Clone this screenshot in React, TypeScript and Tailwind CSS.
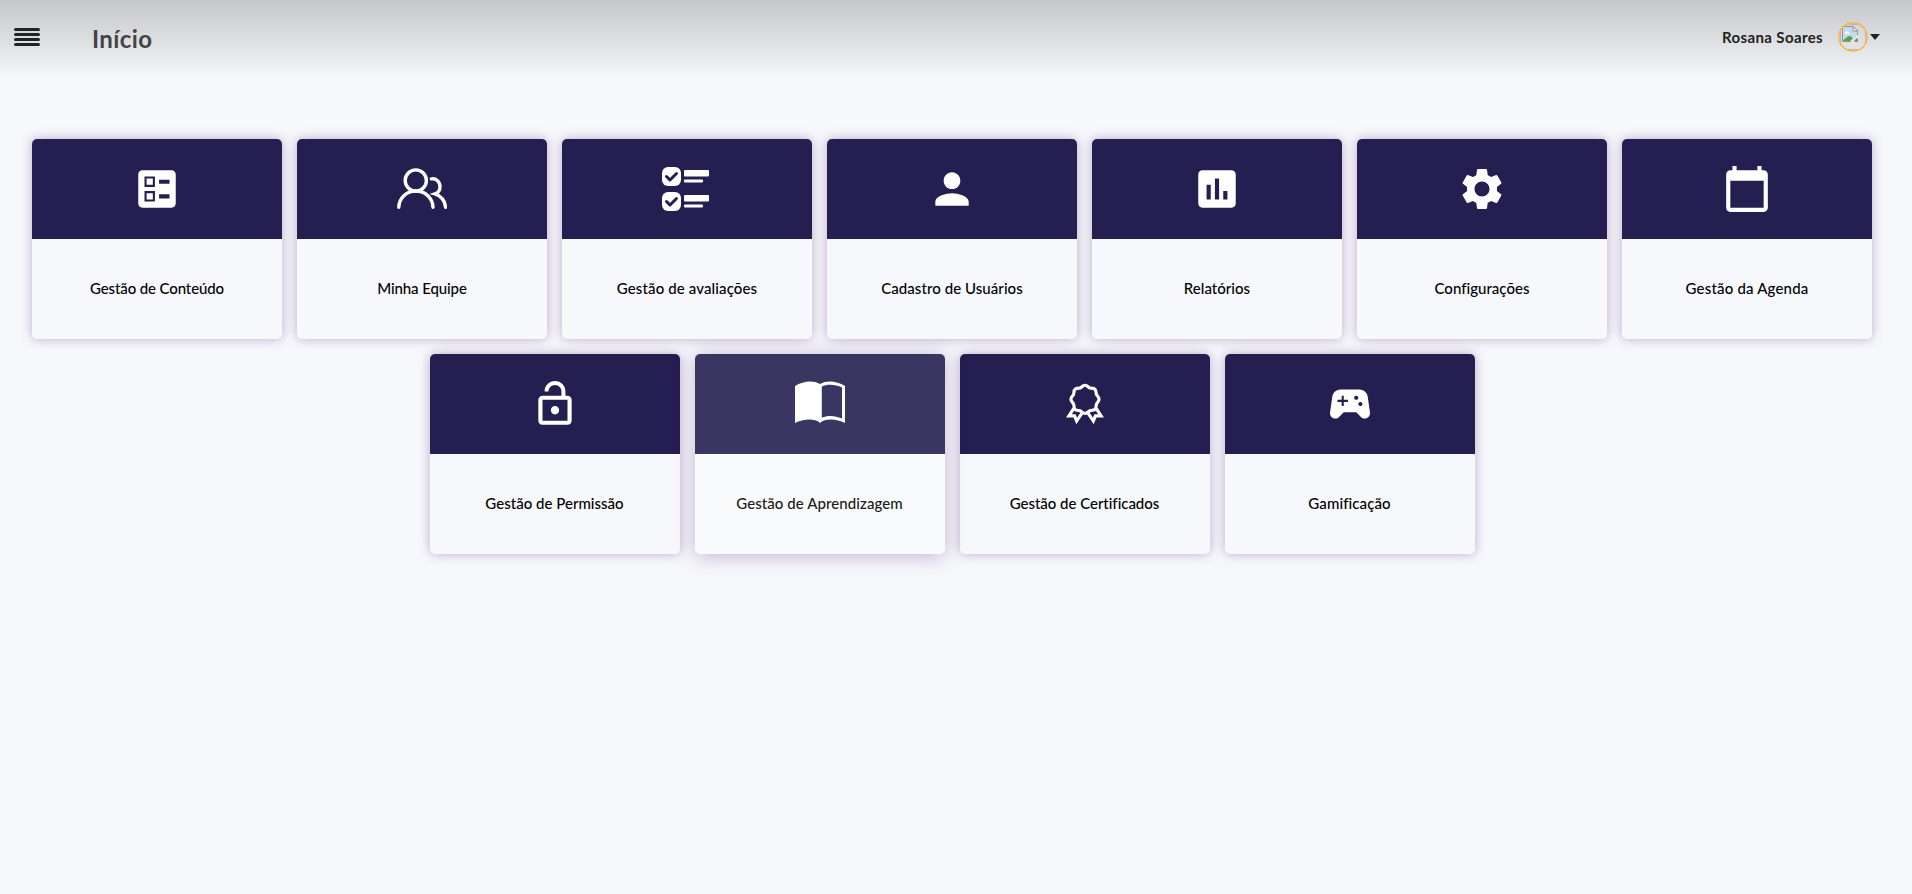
import React from "react";
import { LiaAwardSolid } from "react-icons/lia";
import {
    MdAssessment,
    MdBallot,
    MdCalendarToday,
    MdLockOpen,
    MdPerson,
    MdSettings,
    MdSportsEsports,
} from "react-icons/md";

const TeamIcon = () => (
    <svg width="50" height="50" viewBox="0 0 50 50" fill="none" stroke="currentColor" strokeWidth="3.4" strokeLinecap="round">
        <circle cx="18.8" cy="16.5" r="10.6" />
        <path d="M1.8 43.2C2 34 9.5 27 18.8 27S35.8 34 36 43.2" />
        <path d="M34.3 14.9c5-.8 8.7 3 8.7 7.6 0 3.6-2 6.400-5 7.400 6 1.800 10.300 7 10.500 13.300" />
    </svg>
);

const ChecklistIcon = () => (
    <svg width="50" height="50" viewBox="0 0 50 50" fill="currentColor">
        <rect x="0" y="3" width="19" height="19" rx="6" />
        <rect x="0" y="28" width="19" height="19" rx="6" />
        <rect x="22" y="6" width="25" height="6.5" rx="1" />
        <rect x="22" y="15.5" width="19" height="3" rx="1" />
        <rect x="22" y="31" width="25" height="6.5" rx="1" />
        <rect x="22" y="40.5" width="19" height="3" rx="1" />
        <path
            d="M4.5 12.5l3.5 3.5 6.5-6.5M4.5 37.5l3.5 3.5 6.5-6.5"
            fill="none"
            stroke="#251e50"
            strokeWidth="3"
            strokeLinecap="round"
            strokeLinejoin="round"
        />
    </svg>
);

const BookIcon = () => (
    <svg width="50" height="50" viewBox="0 0 50 50" fill="currentColor">
        <path d="M0 7C8 2 18 1 25 5C32 1 42 2 50 7V44C42 40 30.5 39 25 44C19.5 39 8 40 0 44Z" />
        <path d="M26.8 7.5C33 4.8 40.5 5.5 47 8.5V39.5C40.5 36.8 33 36.1 26.8 38.8Z" fill="#3b3661" />
    </svg>
);

const BrokenImage = () => (
    <svg width="30" height="30" viewBox="0 0 30 30">
        <path d="M2.5 5V25M27.5 9V21M10 27.5H20M10 2.5H20" stroke="#b8b8bb" />
        <path d="M4.5 4.5H15L19.5 9V19.5H4.5Z" fill="#c5d8f5" stroke="#929292" />
        <path d="M15 4.5V9H19.5Z" fill="#fff" stroke="#929292" />
        <path d="M7 11c0-2 2.500-2.500 3-1 1.500 0 2 1 1.500 2H7Z" fill="#fff" />
        <path d="M5 19c2-3 5-5 7-5l3 2-3 3Z" fill="#57a639" />
        <path d="M12 20.5L20 12.5V16L15.5 20.5Z" fill="#e7e7ea" />
        <path d="M16 19l3-3v3Z" fill="#57a639" />
        <circle cx="15" cy="15" r="14.3" fill="none" stroke="#fdb225" strokeWidth="1.4" />
    </svg>
);

const cards = [
    { label: "Gestão de Conteúdo", icon: <MdBallot size={50} />, spacing: "tracking-[-0.12px]" },
    { label: "Minha Equipe", icon: <TeamIcon />, spacing: "tracking-[-0.1px]" },
    { label: "Gestão de avaliações", icon: <ChecklistIcon />, spacing: "tracking-[0.12px]" },
    { label: "Cadastro de Usuários", icon: <MdPerson size={50} />, spacing: "tracking-[0.06px]" },
    { label: "Relatórios", icon: <MdAssessment size={50} />, spacing: "tracking-[0.03px]" },
    { label: "Configurações", icon: <MdSettings size={50} />, spacing: "tracking-[0.02px]" },
    { label: "Gestão da Agenda", icon: <MdCalendarToday size={50} />, spacing: "tracking-[0.18px]" },
    { label: "Gestão de Permissão", icon: <MdLockOpen size={50} />, spacing: "tracking-[0.02px]" },
    { label: "Gestão de Aprendizagem", icon: <BookIcon />, spacing: "tracking-[0.08px]", active: true },
    { label: "Gestão de Certificados", icon: <LiaAwardSolid size={50} />, spacing: "tracking-[-0.03px]" },
    { label: "Gamificação", icon: <MdSportsEsports size={50} />, spacing: "tracking-[0.1px]" },
];

const Header = () => {
    return (
        <header className="h-20 flex items-start justify-between bg-linear-to-b from-[#c5c6c8] to-[#f7f8fc]">
            <div className="flex items-start">
                <button className="mt-7 ml-3.5 flex flex-col gap-0.5">
                    <span className="h-[3px] w-[26px] rounded-full bg-[#222]" />
                    <span className="h-[3px] w-[26px] rounded-full bg-[#222]" />
                    <span className="h-[3px] w-[26px] rounded-full bg-[#222]" />
                    <span className="h-[3px] w-[26px] rounded-full bg-[#222]" />
                </button>
                <h1 className="mt-[23px] ml-[52px] text-2xl leading-8 font-bold tracking-[0.4px] text-[#444]">Início</h1>
            </div>
            <div className="mt-[22px] mr-8 flex items-center">
                <span className="text-[15px] font-bold tracking-[0.37px] text-[#222]">Rosana Soares</span>
                <div className="ml-[15px] h-[30px] w-[30px] overflow-hidden rounded-full">
                    <BrokenImage />
                </div>
                <svg width="10" height="6" viewBox="0 0 10 6" className="ml-0.5">
                    <path d="M0 0H10L5 6Z" fill="#222" />
                </svg>
            </div>
        </header>
    );
};

const Card = ({ label, icon, spacing, active }: { label: string; icon: React.ReactNode; spacing: string; active?: boolean }) => {
    return (
        <div
            className={
                active
                    ? "h-[200px] w-[250px] overflow-hidden rounded-[5px] bg-[#f9fafc] text-[#1a1a1a] z-10 shadow-[0_2px_20px_rgba(70,20,100,0.3)]"
                    : "h-[200px] w-[250px] overflow-hidden rounded-[5px] bg-[#f7f8fc] text-black shadow-[0_0_12px_rgba(70,20,100,0.34)]"
            }
        >
            <div className={active ? "h-[100px] flex items-center justify-center bg-[#3b3661] text-white" : "h-[100px] flex items-center justify-center bg-[#251e50] text-white"}>
                {icon}
            </div>
            <div className={`h-[100px] pb-0.5 flex items-center justify-center text-[15px] font-medium ${spacing}`}>{label}</div>
        </div>
    );
};

const App = () => {
    return (
        <div className="min-h-screen bg-[#f7f8fc] font-['Lato','Liberation_Sans',sans-serif]">
            <Header />
            <main className="mt-[59px] w-[1904px] flex flex-wrap justify-center gap-[15px] px-6">
                {cards.map((card) => (
                    <Card key={card.label} {...card} />
                ))}
            </main>
        </div>
    );
};

export default App;
